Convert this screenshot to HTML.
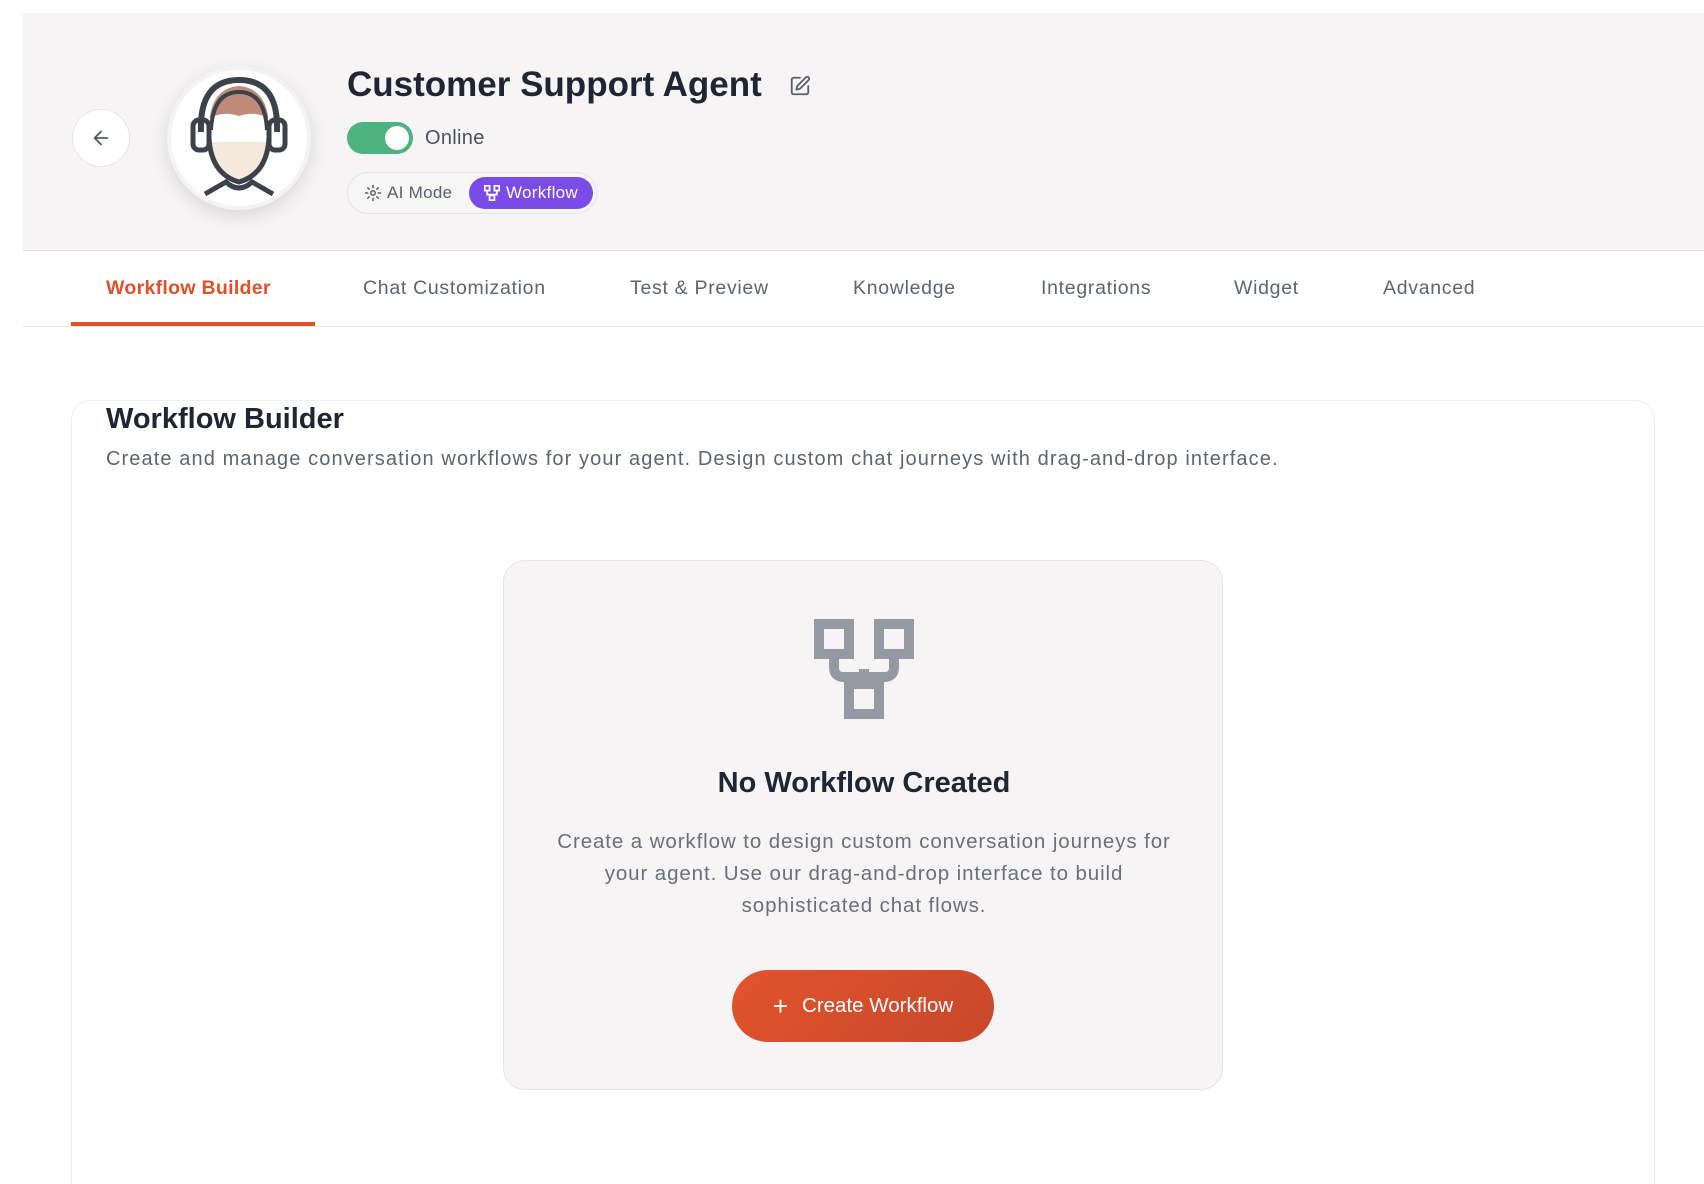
<!DOCTYPE html>
<html><head><meta charset="utf-8"><style>
*{box-sizing:border-box;margin:0;padding:0}
html{width:1704px;height:1184px;overflow:hidden}
body{width:1704px;height:1184px;overflow:hidden;background:#fff;font-family:"Liberation Sans",sans-serif;position:relative}
.abs{position:absolute}
.header{left:23px;top:13px;width:1681px;height:238px;background:#f6f4f5;border-bottom:1px solid #e4e4e7}
.back{left:72px;top:109px;width:58px;height:58px;border-radius:50%;background:#fff;border:1px solid #e6e6e8;display:flex;align-items:center;justify-content:center}
.avatar{left:167px;top:66px;width:144px;height:144px;border-radius:50%;background:#fff;box-shadow:0 6px 18px rgba(0,0,0,.12);border:4px solid #f3f3f3;overflow:hidden}
.title{left:347px;top:65px;font-size:35px;font-weight:bold;color:#1f2533;white-space:nowrap}
.toggle{left:347px;top:122px;width:66px;height:32px;border-radius:16px;background:#4cb27f}
.toggle:after{content:"";position:absolute;right:4px;top:4px;width:24px;height:24px;border-radius:50%;background:#fff}
.online{left:425px;top:127px;font-size:20px;color:#4b5160;letter-spacing:.3px}
.modes{left:347px;top:172px;width:250px;height:42px;border-radius:21px;border:1px solid #e3e3e6;background:#f7f6f7}
.ai{left:16px;top:10px;font-size:17px;color:#5b606c;display:flex;align-items:center;gap:5px;letter-spacing:.3px}
.wf{left:121px;top:4px;width:124px;height:32px;border-radius:16px;background:#7b4be8;color:#fff;font-size:17px;display:flex;align-items:center;justify-content:center;gap:6px;letter-spacing:.3px}
.tab{top:277px;font-size:19.5px;color:#5f6470;white-space:nowrap;letter-spacing:.7px}
.tabbar{left:23px;top:326px;width:1681px;height:1px;background:#e6e6e8}
.under{left:71px;top:322px;width:244px;height:4px;background:#e0502a}
.card{left:71px;top:400px;width:1584px;height:784px;border:1px solid #f0f0f2;border-bottom:none;border-radius:20px 20px 0 0;background:#fff}
.h2{left:106px;top:403px;font-size:29px;font-weight:bold;color:#1f2533}
.sub{left:106px;top:448px;font-size:20px;letter-spacing:1.1px;color:#5f6470;white-space:nowrap}
.empty{left:503px;top:560px;width:720px;height:530px;border-radius:22px;border:1px solid #e4e4e6;background:#f6f4f5}
.h3{left:0;width:720px;top:206px;text-align:center;font-size:29px;font-weight:bold;color:#1f2533}
.p{left:40px;width:640px;top:265px;text-align:center;font-size:20.5px;line-height:32px;color:#6a6f7b;letter-spacing:.9px}
.btn{left:228px;top:409px;width:262px;height:72px;border-radius:36px;background:linear-gradient(135deg,#e0542d,#c9472a);color:#fff;font-size:20.5px;display:flex;align-items:center;justify-content:center;gap:14px}
</style></head><body>
<div class="abs header"></div>
<div class="abs back"><svg width="22" height="22" viewBox="0 0 24 24" fill="none" stroke="#555b66" stroke-width="2" stroke-linecap="round" stroke-linejoin="round"><path d="M19 12H5M12 19l-7-7 7-7"/></svg></div>
<div class="abs avatar"><svg width="136" height="136" viewBox="0 0 136 136">
<path d="M38 55 Q40 18 68 16 Q96 18 98 55 L98 62 L38 62Z" fill="#c08a78"/>
<path d="M36 62 H100 V72 Q98 100 68 112 Q38 100 36 72Z" fill="#f5e9de"/>
<path d="M36 50 Q50 40 68 46 Q86 40 100 50 V62 H36Z" fill="#fff"/>
<path d="M36 62 H100 V72 H36Z" fill="#fff"/>
<path d="M38 68 Q40 104 68 112 Q96 104 98 68" fill="none" stroke="#3d4149" stroke-width="5"/>
<path d="M30 62 Q28 10 68 10 Q108 10 106 62" fill="none" stroke="#3d4149" stroke-width="6"/>
<path d="M40 60 Q42 22 68 22 Q94 22 96 60" fill="none" stroke="#3d4149" stroke-width="4"/>
<rect x="22" y="50" width="16" height="30" rx="6" fill="none" stroke="#3d4149" stroke-width="5"/>
<rect x="98" y="50" width="16" height="30" rx="6" fill="none" stroke="#3d4149" stroke-width="5"/>
<path d="M34 124 L55 112 Q68 124 81 112 L102 124" fill="none" stroke="#3d4149" stroke-width="5"/>
</svg></div>
<div class="abs title">Customer Support Agent</div>
<svg class="abs" style="left:789px;top:75px" width="22" height="22" viewBox="0 0 24 24" fill="none" stroke="#5b606c" stroke-width="2" stroke-linecap="round" stroke-linejoin="round"><path d="M12 3H5a2 2 0 0 0-2 2v14a2 2 0 0 0 2 2h14a2 2 0 0 0 2-2v-7"/><path d="M18.4 2.6a2.1 2.1 0 0 1 3 3L12 15l-4 1 1-4Z"/></svg>
<div class="abs toggle"></div>
<div class="abs online">Online</div>
<div class="abs modes">
<div class="abs ai"><svg width="18" height="18" viewBox="0 0 24 24" fill="none" stroke="#5b606c" stroke-width="2" stroke-linecap="round"><circle cx="12" cy="12" r="3"/><path d="M12 2v3M12 19v3M2 12h3M19 12h3M5 5l2 2M17 17l2 2M5 19l2-2M17 7l2-2"/></svg>AI Mode</div>
<div class="abs wf"><svg width="16" height="16" viewBox="0 0 100 100" fill="none" stroke="#fff" stroke-width="11"><rect x="5" y="5" width="30" height="30"/><rect x="65" y="5" width="30" height="30"/><rect x="35" y="65" width="30" height="30"/><path d="M20 40V60H80V40M50 60V65"/></svg>Workflow</div>
</div>
<div class="abs tab" style="left:106px;color:#e0502a;font-weight:bold;letter-spacing:.3px">Workflow Builder</div>
<div class="abs tab" style="left:363px">Chat Customization</div>
<div class="abs tab" style="left:630px">Test &amp; Preview</div>
<div class="abs tab" style="left:853px">Knowledge</div>
<div class="abs tab" style="left:1041px">Integrations</div>
<div class="abs tab" style="left:1234px">Widget</div>
<div class="abs tab" style="left:1383px">Advanced</div>
<div class="abs tabbar"></div>
<div class="abs under"></div>
<div class="abs card"></div>
<div class="abs h2">Workflow Builder</div>
<div class="abs sub">Create and manage conversation workflows for your agent. Design custom chat journeys with drag-and-drop interface.</div>
<div class="abs empty">
<svg class="abs" style="left:310px;top:58px" width="100" height="100" viewBox="0 0 100 100" fill="none" stroke="#9699a1" stroke-width="10"><rect x="5" y="5" width="30" height="30"/><rect x="65" y="5" width="30" height="30"/><rect x="35" y="65" width="30" height="30"/><path d="M20 40V48Q20 58 30 58H70Q80 58 80 48V40M50 50V65"/></svg>
<div class="abs h3">No Workflow Created</div>
<div class="abs p">Create a workflow to design custom conversation journeys for your agent. Use our drag-and-drop interface to build sophisticated chat flows.</div>
<div class="abs btn"><span style="font-size:26px;font-weight:300">+</span>Create Workflow</div>
</div>
</body></html>
